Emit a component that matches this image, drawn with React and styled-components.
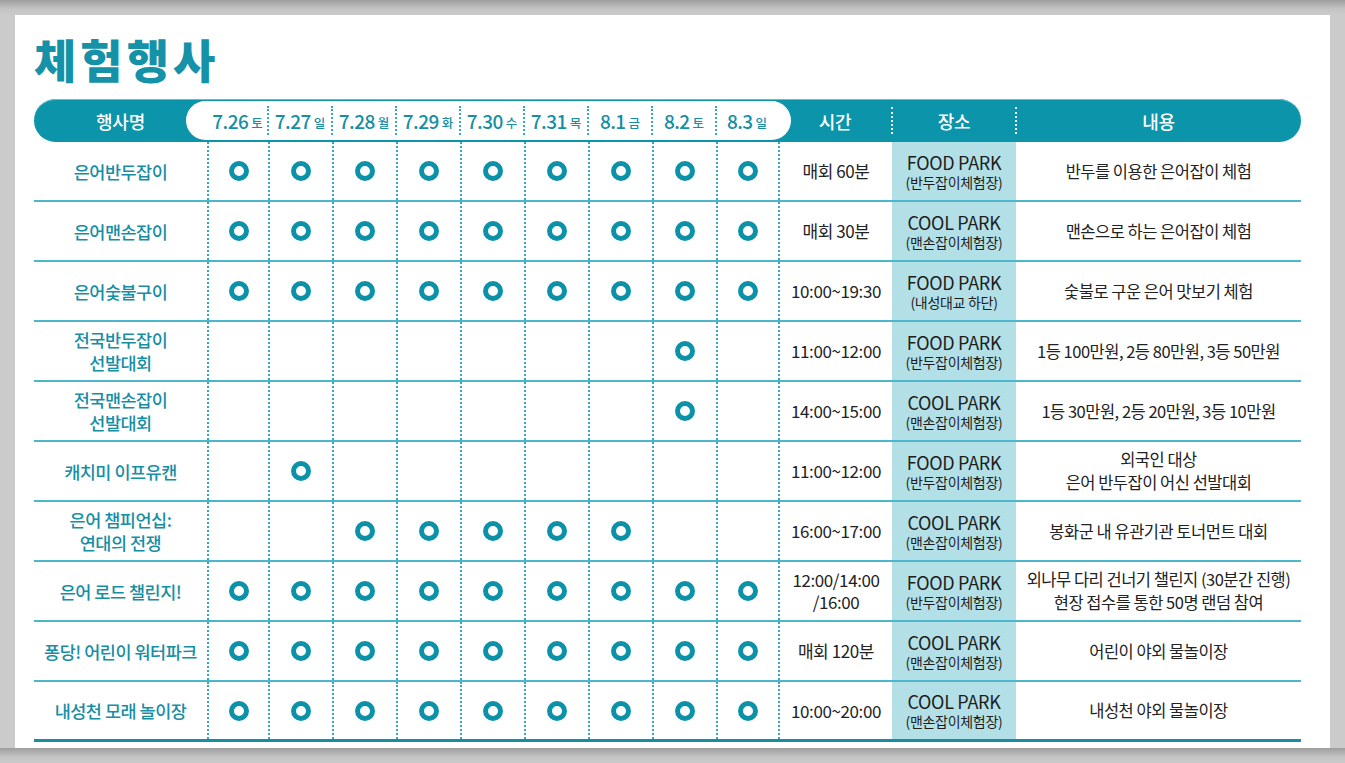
import React from "react";
import styled, { createGlobalStyle } from "styled-components";

const TEAL = "#0b94aa";
const TEAL_TEXT = "#168ea4";
const LINE = "#4cb6ca";
const DOT = "#33a8c2";

const GlobalStyle = createGlobalStyle`
  html, body {
    margin: 0;
    padding: 0;
  }
  body {
    background: linear-gradient(to bottom, #9d9d9d 0px, #c4c4c4 9px, #cbcbcb 15px);
    font-family: "Noto Sans CJK KR", "Noto Sans", sans-serif;
  }
`;

const Card = styled.div`
  box-sizing: border-box;
  margin: 15px 0 0 15px;
  width: 1315px;
  height: 733px;
  background: #ffffff;
  padding: 20px 29px 0 19px;
`;

const Title = styled.h1`
  margin: 0 0 18px 0;
  font-size: 46px;
  line-height: 46px;
  font-weight: 900;
  letter-spacing: 4px;
  color: #1592a7;
`;

const COLS = "173px 61px repeat(7, 64px) 62px 114px 124px 1fr";

const HeaderBar = styled.div`
  display: grid;
  grid-template-columns: ${COLS};
  height: 43px;
  background: ${TEAL};
  border-radius: 22px;
  box-shadow: inset 0 1px 0 #5cc0d0;
`;

const HeadLabel = styled.div`
  position: relative;
  display: flex;
  align-items: center;
  justify-content: center;
  color: #ffffff;
  font-size: 18px;
  font-weight: 500;
  letter-spacing: -0.3px;
  ${(p) =>
    p.$sep &&
    `
    &::before {
      content: "";
      position: absolute;
      left: -1px;
      top: 8px;
      bottom: 8px;
      border-left: 2px dotted rgba(255, 255, 255, 0.95);
    }
  `}
`;

const DatePill = styled.div`
  grid-column: 2 / span 9;
  margin: 2px -13px 2px -21px;
  padding: 0 13px 0 21px;
  background: #ffffff;
  border-radius: 20px;
  display: grid;
  grid-template-columns: 61px repeat(7, 64px) 62px;
`;

const DateHead = styled.div`
  position: relative;
  display: flex;
  align-items: center;
  justify-content: center;
  color: ${TEAL_TEXT};
  ${(p) =>
    p.$sep &&
    `
    &::before {
      content: "";
      position: absolute;
      left: -1px;
      top: 5px;
      bottom: 5px;
      border-left: 2px dotted ${DOT};
    }
  `}
`;

const DateNum = styled.span`
  font-size: 19px;
  font-weight: 500;
  letter-spacing: -0.6px;
`;

const DayName = styled.span`
  font-size: 12.5px;
  font-weight: 500;
  margin-left: 3px;
  margin-top: 3px;
`;

const Row = styled.div`
  box-sizing: border-box;
  display: grid;
  grid-template-columns: ${COLS};
  height: 60px;
  border-bottom: ${(p) => (p.$last ? `3px solid #1a8ca3` : `2px solid ${LINE}`)};
`;

const Cell = styled.div`
  display: flex;
  flex-direction: column;
  align-items: center;
  justify-content: center;
  text-align: center;
  white-space: pre-line;
`;

const NameCell = styled(Cell)`
  color: ${TEAL_TEXT};
  font-size: 17.5px;
  font-weight: 500;
  letter-spacing: -0.5px;
  line-height: 23px;
`;

const DayCell = styled(Cell)`
  border-left: 2px dotted ${DOT};
`;

const Ring = styled.span`
  box-sizing: border-box;
  width: 20px;
  height: 20px;
  border-radius: 50%;
  border: 5px solid #0b92a8;
`;

const TimeCell = styled(Cell)`
  border-left: 2px dotted ${DOT};
  color: #222222;
  font-size: 17px;
  letter-spacing: -0.4px;
  line-height: 22px;
`;

const PlaceCell = styled(Cell)`
  background: #b3e0e7;
  color: #1d1d1d;
`;

const PlaceName = styled.span`
  font-size: 18px;
  letter-spacing: -0.3px;
  line-height: 21px;
`;

const PlaceSub = styled.span`
  font-size: 14px;
  letter-spacing: -0.3px;
  line-height: 18px;
`;

const ContentCell = styled(Cell)`
  color: #222222;
  font-size: 16.5px;
  letter-spacing: -0.5px;
  line-height: 23px;
`;

const DATES = [
  ["7.26", "토"],
  ["7.27", "일"],
  ["7.28", "월"],
  ["7.29", "화"],
  ["7.30", "수"],
  ["7.31", "목"],
  ["8.1", "금"],
  ["8.2", "토"],
  ["8.3", "일"],
];

const ALL = [0, 1, 2, 3, 4, 5, 6, 7, 8];

const EVENTS = [
  { name: "은어반두잡이", days: ALL, time: "매회 60분", place: "FOOD PARK", sub: "(반두잡이체험장)", content: "반두를 이용한 은어잡이 체험" },
  { name: "은어맨손잡이", days: ALL, time: "매회 30분", place: "COOL PARK", sub: "(맨손잡이체험장)", content: "맨손으로 하는 은어잡이 체험" },
  { name: "은어숯불구이", days: ALL, time: "10:00~19:30", place: "FOOD PARK", sub: "(내성대교 하단)", content: "숯불로 구운 은어 맛보기 체험" },
  { name: "전국반두잡이\n선발대회", days: [7], time: "11:00~12:00", place: "FOOD PARK", sub: "(반두잡이체험장)", content: "1등 100만원, 2등 80만원, 3등 50만원" },
  { name: "전국맨손잡이\n선발대회", days: [7], time: "14:00~15:00", place: "COOL PARK", sub: "(맨손잡이체험장)", content: "1등 30만원, 2등 20만원, 3등 10만원" },
  { name: "캐치미 이프유캔", days: [1], time: "11:00~12:00", place: "FOOD PARK", sub: "(반두잡이체험장)", content: "외국인 대상\n은어 반두잡이 어신 선발대회" },
  { name: "은어 챔피언십:\n연대의 전쟁", days: [2, 3, 4, 5, 6], time: "16:00~17:00", place: "COOL PARK", sub: "(맨손잡이체험장)", content: "봉화군 내 유관기관 토너먼트 대회" },
  { name: "은어 로드 챌린지!", days: ALL, time: "12:00/14:00\n/16:00", place: "FOOD PARK", sub: "(반두잡이체험장)", content: "외나무 다리 건너기 챌린지 (30분간 진행)\n현장 접수를 통한 50명 랜덤 참여" },
  { name: "퐁당! 어린이 워터파크", days: ALL, time: "매회 120분", place: "COOL PARK", sub: "(맨손잡이체험장)", content: "어린이 야외 물놀이장" },
  { name: "내성천 모래 놀이장", days: ALL, time: "10:00~20:00", place: "COOL PARK", sub: "(맨손잡이체험장)", content: "내성천 야외 물놀이장" },
];

export default function App() {
  return (
    <>
      <GlobalStyle />
      <Card>
        <Title>체험행사</Title>
        <HeaderBar>
          <HeadLabel>행사명</HeadLabel>
          <DatePill>
            {DATES.map(([num, day], i) => (
              <DateHead key={num} $sep={i > 0}>
                <DateNum>{num}</DateNum>
                <DayName>{day}</DayName>
              </DateHead>
            ))}
          </DatePill>
          <HeadLabel>시간</HeadLabel>
          <HeadLabel $sep>장소</HeadLabel>
          <HeadLabel $sep>내용</HeadLabel>
        </HeaderBar>
        {EVENTS.map((ev, r) => (
          <Row key={ev.name} $last={r === EVENTS.length - 1}>
            <NameCell>{ev.name}</NameCell>
            {DATES.map(([num], i) => (
              <DayCell key={num}>{ev.days.includes(i) && <Ring />}</DayCell>
            ))}
            <TimeCell>{ev.time}</TimeCell>
            <PlaceCell>
              <PlaceName>{ev.place}</PlaceName>
              <PlaceSub>{ev.sub}</PlaceSub>
            </PlaceCell>
            <ContentCell>{ev.content}</ContentCell>
          </Row>
        ))}
      </Card>
    </>
  );
}
